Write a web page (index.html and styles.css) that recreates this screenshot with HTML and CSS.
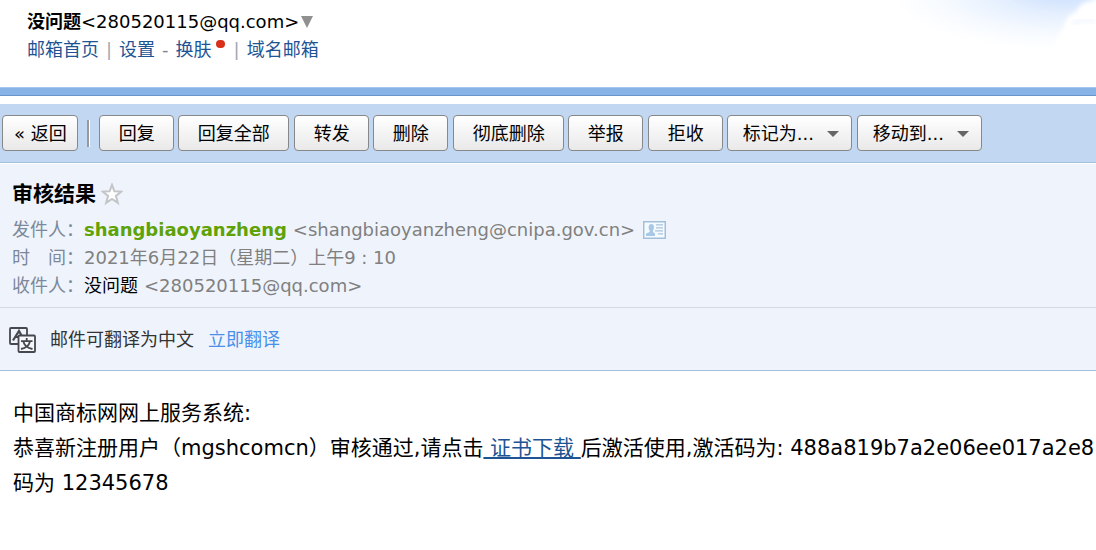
FILE: index.html
```html
<!DOCTYPE html>

<html lang="zh-CN">

<head>

    <meta charset="UTF-8">

    <meta name="viewport" content="width=device-width, initial-scale=1.0">

    <title>审核结果</title>

    <link rel="stylesheet" href="styles.css">

</head>

<body>

    <header class="header">
        <svg class="sky" viewBox="0 0 216 60" aria-hidden="true">
            <defs>
                <radialGradient id="sky-blue" cx="0.5" cy="0.5" r="0.5">
                    <stop offset="0" stop-color="#c9defd"/>
                    <stop offset="0.35" stop-color="#e3eefe"/>
                    <stop offset="0.7" stop-color="#f6faff"/>
                    <stop offset="1" stop-color="#ffffff"/>
                </radialGradient>
                <filter id="cloud-blur" x="-20%" y="-20%" width="140%" height="140%">
                    <feGaussianBlur stdDeviation="2"/>
                </filter>
            </defs>
            <ellipse cx="182" cy="-8" rx="170" ry="58" fill="url(#sky-blue)"/>
            <path d="M184 26 Q186 15 196 12 Q200 2 211 1 L226 -6 V70 H160 Q172 48 184 26Z" fill="#fff" filter="url(#cloud-blur)"/>
            <path d="M192 24 Q202 18 216 21" fill="none" stroke="#eef4fe" stroke-width="3" filter="url(#cloud-blur)"/>
        </svg>

        <div class="account">
            <b>没问题</b><span>&lt;280520115@qq.com&gt;</span>
            <button class="account-btn" aria-label="切换帐号"></button>
        </div>

        <nav class="nav">
            <a href="#">邮箱首页</a>
            <span class="line">|</span>
            <a href="#">设置</a>
            <span>-</span>
            <a href="#" class="skin">换肤</a>
            <span class="line">|</span>
            <a href="#">域名邮箱</a>
        </nav>
    </header>

    <div class="band"></div>

    <div class="toolbar">
        <button class="btn back">« 返回</button>
        <span class="divider"></span>
        <div class="group">
            <button class="btn">回复</button>
            <button class="btn">回复全部</button>
        </div>
        <div class="group">
            <button class="btn">转发</button>
            <button class="btn">删除</button>
        </div>
        <div class="group">
            <button class="btn">彻底删除</button>
            <button class="btn">举报</button>
        </div>
        <div class="group">
            <button class="btn">拒收</button>
            <div class="dropdown">
                <select class="btn" aria-label="标记为">
                    <option>标记为...</option>
                </select>
            </div>
        </div>
        <div class="dropdown">
            <select class="btn" aria-label="移动到">
                <option>移动到...</option>
            </select>
        </div>
    </div>

    <section class="info">
        <h1 class="subject">
            审核结果
            <svg class="star" viewBox="0 0 22 22" aria-hidden="true">
                <path d="M11 1.8 L13.4 8.3 L20.4 8.6 L14.9 12.9 L16.9 19.9 L11 15.9 L5.1 19.9 L7.1 12.9 L1.6 8.6 L8.6 8.3Z" fill="#fff" stroke="#c3c5c8" stroke-width="2"/>
            </svg>
        </h1>

        <div class="row">
            <span class="label">发件人：</span>
            <b class="sender">shangbiaoyanzheng</b>
            <span class="address">&lt;shangbiaoyanzheng@cnipa.gov.cn&gt;</span>
            <svg class="card" viewBox="0 0 23 18" aria-hidden="true">
                <rect x="0.75" y="0.75" width="21.5" height="16.5" fill="#f5faff" stroke="#a3c0da" stroke-width="1.5"/>
                <path d="M3 15 V12.6 L6.6 11 V9.6 Q5.4 8 5.6 5.4 Q5.9 3 8.3 3 Q10.8 3 11 5.4 Q11.2 8 10 9.6 V11 L12 12.4 V15Z" fill="#a9c8e6"/>
                <path d="M13 3.8 H20 M13 6.8 H20 M12 9.8 H20 M15 12.8 H20" stroke="#a9c4de" stroke-width="1.3"/>
            </svg>
        </div>

        <div class="row">
            <span class="label">时<i></i>间：</span>
            <span>2021年6月22日（星期二）上午9 : 10</span>
        </div>

        <div class="row">
            <span class="label">收件人：</span>
            <span class="receiver">没问题</span>
            <span class="address">&lt;280520115@qq.com&gt;</span>
        </div>
    </section>

    <div class="translate">
        <svg class="translate-icon" viewBox="0 0 27 26" aria-hidden="true">
            <path d="M9.5 17 H2 Q1 17 1 16 V2 Q1 1 2 1 H17 Q18 1 18 2 V8.5" fill="none" stroke="#45484d" stroke-width="1.8"/>
            <path d="M4 13.5 L10 4 L12.5 8.5 M6 10 H9" fill="none" stroke="#45484d" stroke-width="2.2"/>
            <rect x="9.5" y="8.5" width="16.5" height="16.5" rx="1" fill="#f5f7fb" stroke="#45484d" stroke-width="1.8"/>
            <path d="M17.7 11 V13.4 M12 14.2 H23.5 M14.3 14.5 Q16 20.5 23.5 22 M21 14.5 Q19.5 20.5 12 22" fill="none" stroke="#45484d" stroke-width="1.8"/>
        </svg>
        <span>邮件可翻译为中文</span>
        <a href="#">立即翻译</a>
    </div>

    <main class="content">
        中国商标网网上服务系统:<br>
        恭喜新注册用户（mgshcomcn）审核通过,请点击<a href="#">&nbsp;证书下载&nbsp;</a>后激活使用,激活码为: 488a819b7a2e06ee017a2e8<br>
        码为 12345678
    </main>

</body>

</html>
```

FILE: styles.css
```css
body {
    margin: 0;
    background-color: #fff;
    color: #000;
    font-family: "DejaVu Sans", "Noto Sans CJK SC", sans-serif;
    font-size: 18px;
    line-height: 28px;
    overflow-x: hidden;
}

a {
    color: #1e5494;
    text-decoration: none;
}

button, select {
    font: inherit;
    color: inherit;
    cursor: pointer;
}

/* Header */
.header {
    position: relative;
    padding: 8px 27px 23px;
}

.sky {
    position: absolute;
    top: 0;
    right: 0;
    width: 216px;
    height: 60px;
}

.account, .nav {
    display: flex;
    align-items: center;
}

.account-btn {
    margin-left: 2px;
    padding: 0;
    border: 6px solid transparent;
    border-top: 12px solid #909090;
    border-bottom: 0;
    background: none;
}

.nav {
    gap: 7px;
    color: #798699;
}

.nav .line {
    color: #a0a8b4;
}

.skin {
    position: relative;
    margin-right: 15px;
}

.skin::after {
    content: "";
    position: absolute;
    top: 4px;
    right: -13px;
    width: 9px;
    height: 8px;
    border-radius: 4px;
    background-color: #d9301a;
}

.band {
    height: 7px;
    margin-bottom: 8px;
    border-top: 1px solid #a5c6ee;
    border-bottom: 1px solid #6795cb;
    background-color: #88b3e7;
}

/* Toolbar */
.toolbar {
    display: flex;
    align-items: center;
    gap: 5px;
    padding: 11px 2px;
    border-bottom: 1px solid #a5c0dc;
    background-color: #c2d8f2;
}

.group {
    display: flex;
    gap: 4px;
}

.btn {
    box-sizing: border-box;
    height: 36px;
    padding: 2px 18px 0 19px;
    border: 1px solid #888;
    border-radius: 4px;
    background: linear-gradient(#fff, #e9e9e9);
    line-height: 32px;
    white-space: nowrap;
}

.btn:hover {
    background: #fff;
}

.back {
    padding-right: 10px;
    padding-left: 11px;
}

.divider {
    width: 2px;
    height: 27px;
    margin: 0 4px;
    border-right: 1px solid #fff;
    background-color: #999;
}

.dropdown {
    position: relative;
}

.dropdown .btn {
    appearance: none;
    width: 125px;
    padding-right: 0;
    padding-left: 15px;
}

.dropdown::after {
    content: "";
    position: absolute;
    top: 16px;
    right: 13px;
    border: 6px solid transparent;
    border-top-color: #666;
    border-bottom: 0;
    pointer-events: none;
}

/* Mail info */
.info {
    padding: 15px 12px 7px;
    border-top: 1px solid #fff;
    border-bottom: 1px solid #d3dae2;
    background-color: #eff4fc;
    color: #808080;
}

.subject {
    display: flex;
    align-items: center;
    gap: 5px;
    margin: 0 0 7px;
    color: #000;
    font-size: 21px;
    line-height: 30px;
}

.star {
    width: 22px;
    height: 22px;
}

.row {
    display: flex;
    align-items: center;
}

.label {
    display: flex;
    flex: none;
    width: 72px;
    color: #7d8899;
}

.label i {
    width: 18px;
}

.sender {
    color: #5fa207;
}

.receiver {
    color: #000;
}

.address {
    margin-left: 6px;
}

.card {
    width: 23px;
    height: 18px;
    margin-left: 8px;
}

/* Translate bar */
.translate {
    display: flex;
    align-items: center;
    padding: 18px 9px 16px;
    border-bottom: 1px solid #a5bfdc;
    background-color: #eff4fc;
    color: #333;
}

.translate-icon {
    width: 27px;
    height: 26px;
    margin-right: 14px;
}

.translate a {
    margin-left: 14px;
    color: #4a90e8;
}

/* Mail content */
.content {
    padding: 25px 13px;
    font-size: 21px;
    line-height: 35px;
    white-space: nowrap;
}

.content a {
    text-decoration: underline;
}
```
